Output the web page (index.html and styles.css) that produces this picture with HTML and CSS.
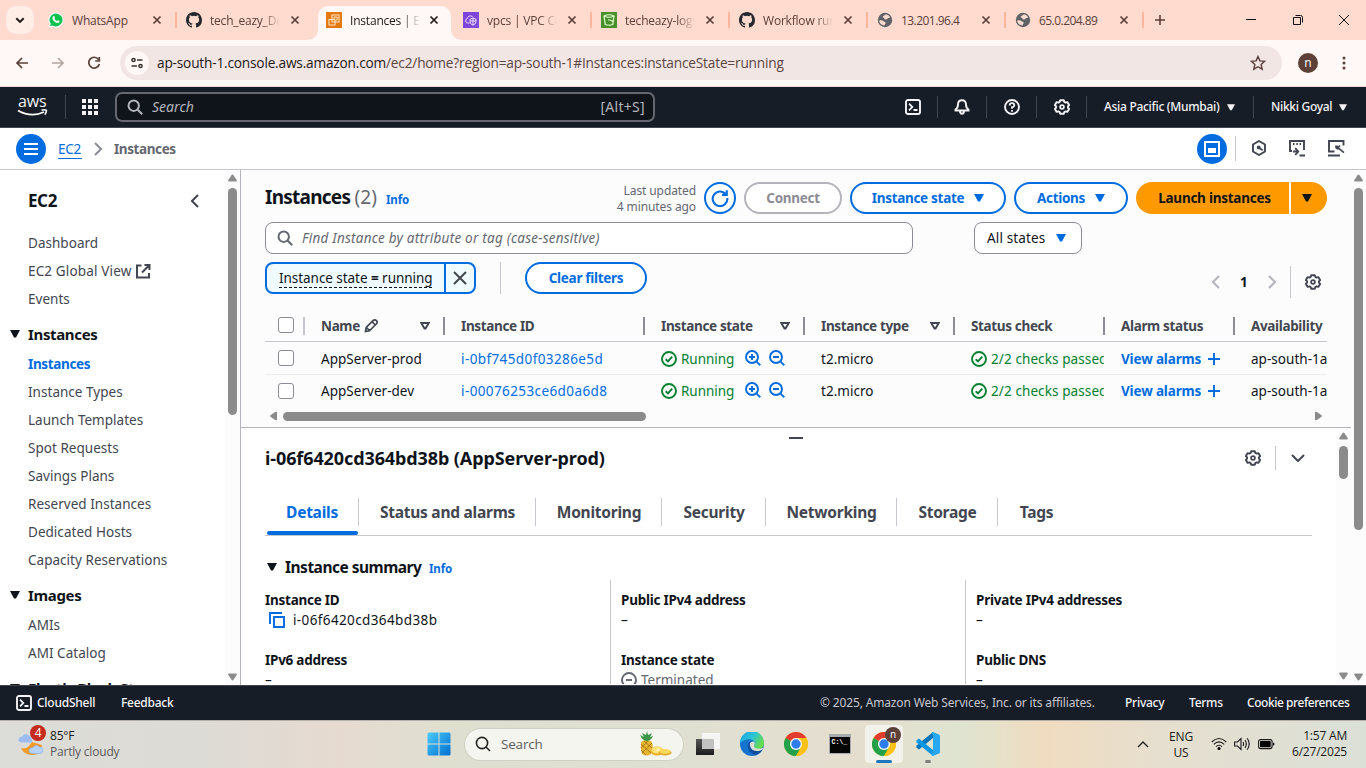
FILE: index.html
```html
<!DOCTYPE html>
<html lang="en">
<head>
<meta charset="utf-8">
<title>Instances | EC2</title>
<link rel="stylesheet" href="styles.css">
</head>
<body>
<svg class="defs" width="0" height="0">
  <symbol id="x" viewBox="0 0 10 10"><path d="M1.5 1.5l7 7M8.5 1.5l-7 7" fill="none" stroke="currentColor" stroke-width="1.7"/></symbol>
  <symbol id="github" viewBox="0 0 16 16"><path fill="#24292f" d="M8 0C3.58 0 0 3.58 0 8c0 3.54 2.29 6.53 5.47 7.59.4.07.55-.17.55-.38 0-.19-.01-.82-.01-1.49-2.01.37-2.53-.49-2.69-.94-.09-.23-.48-.94-.82-1.13-.28-.15-.68-.52-.01-.53.63-.01 1.08.58 1.23.82.72 1.21 1.87.87 2.33.66.07-.52.28-.87.51-1.07-1.78-.2-3.64-.89-3.64-3.95 0-.87.31-1.59.82-2.15-.08-.2-.36-1.02.08-2.12 0 0 .67-.21 2.2.82a7.5 7.5 0 0 1 4 0c1.53-1.04 2.2-.82 2.2-.82.44 1.1.16 1.92.08 2.12.51.56.82 1.27.82 2.15 0 3.07-1.87 3.75-3.65 3.95.29.25.54.73.54 1.48 0 1.07-.01 1.93-.01 2.2 0 .21.15.46.55.38A8 8 0 0 0 16 8c0-4.42-3.58-8-8-8z"/></symbol>
  <symbol id="globe" viewBox="0 0 16 16"><circle cx="8" cy="8" r="7.2" fill="#5f6368"/><path d="M2.2 8.600c1.700-.5 3.400-.2 4.400.7.9.9 2 .2 2 1.600 0 1.100-.9 1-.9 2.400-2.900.300-5.400-1.900-5.500-4.700zM6 4.300c1.400-.9 1.800-2 3.300-1.900 1.700.3 3 1.400 3.800 2.600-.6 1.400-1.900.5-2.600 1.500-.5.8-1.500 1.300-2.500.8-.9-.4-.3-1.200-1.200-1.500C6 5.500 5.300 5 6 4.300z" fill="#ffdbcf"/></symbol>
  <symbol id="search" viewBox="0 0 16 16"><circle cx="6.700" cy="6.700" r="5.200" fill="none" stroke="currentColor" stroke-width="2"/><path d="M10.500 10.500l4.700 4.700" stroke="currentColor" stroke-width="2"/></symbol>
  <symbol id="gear" viewBox="0 0 16 16"><path d="M6.200 1.200h3.600l.5 1.700 1.300.7 1.700-.5 1.800 3-1.200 1.300v1.200l1.200 1.300-1.800 3-1.700-.5-1.300.7-.5 1.700H6.200l-.5-1.700-1.300-.7-1.700.5-1.800-3 1.200-1.300V7.400L.9 6.100l1.800-3 1.700.5 1.300-.7z" fill="none" stroke="currentColor" stroke-width="1.900" stroke-linejoin="round"/><circle cx="8" cy="8" r="1.900" fill="none" stroke="currentColor" stroke-width="1.700"/></symbol>
  <symbol id="tri" viewBox="0 0 10 8"><path d="M0 0h10L6 7.500H4z" fill="currentColor"/></symbol>
  <symbol id="sort" viewBox="0 0 10 8"><path d="M1.300 1h7.400L5.500 6.500h-1z" fill="none" stroke="#424650" stroke-width="1.900"/></symbol>
  <symbol id="shell" viewBox="0 0 16 16"><rect x="1" y="1" width="14" height="14" rx="2" fill="none" stroke="currentColor" stroke-width="1.900"/><path d="M4 4.700L7.300 8 4 11.300M8.500 11h4" fill="none" stroke="currentColor" stroke-width="1.800"/></symbol>
  <symbol id="ok" viewBox="0 0 16 16"><circle cx="8" cy="8" r="7" fill="none" stroke="#00802f" stroke-width="1.900"/><path d="M4.700 8.200L7 10.400l4.200-4.700" fill="none" stroke="#00802f" stroke-width="1.900"/></symbol>
  <symbol id="zin" viewBox="0 0 16 16"><circle cx="7" cy="7" r="6" fill="none" stroke="#006ce0" stroke-width="1.900"/><path d="M11.300 11.300l4 4M4 7h6M7 4v6" stroke="#006ce0" stroke-width="1.900"/></symbol>
  <symbol id="zout" viewBox="0 0 16 16"><circle cx="7" cy="7" r="6" fill="none" stroke="#006ce0" stroke-width="1.900"/><path d="M11.300 11.300l4 4M4 7h6" stroke="#006ce0" stroke-width="1.900"/></symbol>
  <symbol id="up" viewBox="0 0 9 8"><path d="M3.500 1.200q1-1.400 2 0L8.700 6q.5 1.500-.7 1.500H1Q-.2 7.500.3 6z" fill="#8b8b8b"/></symbol>
  <symbol id="chrome" viewBox="0 0 24 24"><circle cx="12" cy="12" r="12" fill="#fbc116"/><path d="M12 12L1.600 6A12 12 0 0 1 22.400 6z" fill="#e33b2e"/><path d="M1.600 6A12 12 0 0 0 12 24l5-9-5-3z" fill="#22a04a"/><path d="M12 6h10.400A12 12 0 0 1 12 24l5.200-9z" fill="#fbc116"/><circle cx="12" cy="12" r="6" fill="#fff"/><circle cx="12" cy="12" r="4.700" fill="#2f7de9"/></symbol>
</svg>

<header class="tabs">
  <div class="tablist"><svg width="10" height="7" viewBox="0 0 10 7"><path d="M1.300 1.200L5 4.900l3.700-3.700" fill="none" stroke="#1f1a18" stroke-width="2"/></svg></div>
  <div class="tab"><svg class="fav" viewBox="0 0 16 16"><path d="M8 .5a7.500 7.500 0 1 1-3.800 14L.5 15.500l1-3.600A7.500 7.500 0 0 1 8 .5z" fill="#fff"/><path d="M8 1.500A6.500 6.500 0 1 1 4.500 13.500l-2.500.6.700-2.400A6.500 6.500 0 0 1 8 1.500z" fill="#0fc24f"/><path d="M5.300 4.300c.6-.6 1-.3 1.200.2l.5 1.200c0 .4-.6.8-.6 1.100.5 1 1.300 1.700 2.400 2.200.5 0 .7-.8 1.100-.8l1.700.9c.2.8-.5 1.700-1.500 1.800-2.800.2-6.300-3.200-5.600-5.500.1-.4.4-.8.8-1.100z" fill="#fff"/></svg><span class="tt">WhatsApp</span><svg class="tx"><use href="#x"/></svg></div>
  <div class="tab sep"><svg class="fav"><use href="#github"/></svg><span class="tt fade">tech_eazy_Dev</span><svg class="tx"><use href="#x"/></svg></div>
  <div class="tab active"><svg class="fav" viewBox="0 0 16 16"><path d="M0 0h16v16H0z" fill="#e47911"/><path d="M6 3h7v7H6zM8.500 7.500H3v5.500h6V8" fill="none" stroke="#ffe3c4" stroke-width="1.100"/><path d="M8 5h3v3H8z" fill="none" stroke="#ffe3c4"/></svg><span class="tt fade">Instances | EC2</span><svg class="tx"><use href="#x"/></svg></div>
  <div class="tab"><svg class="fav" viewBox="0 0 16 16"><path d="M0 0h16v16H0z" fill="#7d45dc"/><path d="M6.500 11H4.500a2.200 2.200 0 0 1-.3-4.300C4.300 4 8.500 3 9.900 5.200" fill="none" stroke="#efe2ff"/><path d="M10 6l3 1.300v2.500q0 2.200-3 3.400-3-1.200-3-3.400V7.300zM10 6v7M7 9h6" fill="none" stroke="#efe2ff"/></svg><span class="tt fade">vpcs | VPC Co</span><svg class="tx"><use href="#x"/></svg></div>
  <div class="tab sep"><svg class="fav" viewBox="0 0 16 16"><path d="M0 0h16v16H0z" fill="#47902a"/><path d="M3 4q5-2.500 10 0l-1.300 8.500q-3.700 1.500-7.400 0zM3 4q5 2.500 10 0M7 8h2l3 1.500" fill="none" stroke="#e3ffd2" stroke-width="1.200"/></svg><span class="tt fade">techeazy-logs</span><svg class="tx"><use href="#x"/></svg></div>
  <div class="tab sep"><svg class="fav"><use href="#github"/></svg><span class="tt fade">Workflow runs</span><svg class="tx"><use href="#x"/></svg></div>
  <div class="tab sep"><svg class="fav"><use href="#globe"/></svg><span class="tt ip">13.201.96.4</span><svg class="tx"><use href="#x"/></svg></div>
  <div class="tab sep"><svg class="fav"><use href="#globe"/></svg><span class="tt ip">65.0.204.89</span><svg class="tx"><use href="#x"/></svg></div>
  <div class="newtab sep"><svg width="10" height="10" viewBox="0 0 10 10"><path d="M5 0v10M0 5h10" stroke="#5b403a" stroke-width="1.600"/></svg></div>
  <div class="win">
    <svg width="10" height="10" viewBox="0 0 10 10"><path d="M0 4.500h10" stroke="#111"/></svg>
    <svg width="10" height="10" viewBox="0 0 10 10"><path d="M.5 2.500h7v7h-7zM2.500.5h5q2 0 2 2v5" fill="none" stroke="#111"/></svg>
    <svg width="10" height="10" viewBox="0 0 10 10"><path d="M0 0l10 10M10 0L0 10" stroke="#111"/></svg>
  </div>
</header>

<div class="toolbar">
  <div class="nav">
    <svg width="14" height="14" viewBox="0 0 14 14"><path d="M7 2L2 7l5 5M2 7h11" fill="none" stroke="#5b403a" stroke-width="1.700"/></svg>
    <svg width="14" height="14" viewBox="0 0 14 14"><path d="M7 2l5 5-5 5M12 7H1" fill="none" stroke="#b5a5a1" stroke-width="1.700"/></svg>
    <svg width="14" height="14" viewBox="0 0 14 14"><path d="M11.500 3.400A5.400 5.400 0 1 0 12.400 8M12.300 1v4H8.200" fill="none" stroke="#5b403a" stroke-width="1.700"/></svg>
  </div>
  <div class="omni">
    <span class="site"><svg width="14" height="12" viewBox="0 0 14 12"><circle cx="3.500" cy="3" r="1.600" fill="none" stroke="#3b302d" stroke-width="1.500"/><circle cx="10.500" cy="9" r="1.600" fill="none" stroke="#3b302d" stroke-width="1.500"/><path d="M7 3h5.500M1.500 9H7" stroke="#3b302d" stroke-width="1.500"/></svg></span>
    <span class="url"><b>ap-south-1.console.aws.amazon.com</b>/ec2/home?region=ap-south-1#Instances:instanceState=running</span>
    <svg class="star" width="16" height="16" viewBox="0 0 16 16"><path d="M8 1.500l1.900 4.400 4.800.4-3.600 3.200 1.100 4.700L8 11.700l-4.200 2.500 1.100-4.700L1.300 6.300l4.800-.4z" fill="none" stroke="#5b403a" stroke-width="1.400"/></svg>
  </div>
  <span class="avatar">n</span>
  <svg class="dots" width="4" height="14" viewBox="0 0 4 14"><circle cx="2" cy="2" r="1.500"/><circle cx="2" cy="7" r="1.500"/><circle cx="2" cy="12" r="1.500"/></svg>
</div>

<nav class="aws">
  <div class="logo"><span>aws</span><svg width="31" height="8" viewBox="0 0 31 8"><path d="M1 1.500q13 7.500 26 1.500" fill="none" stroke="#fff" stroke-width="1.800"/><path d="M24.500 1.300q3-1 5 .1-.2 2.600-1.700 4.300" fill="none" stroke="#fff" stroke-width="1.500"/></svg></div>
  <div class="apps"><svg width="16" height="16" viewBox="0 0 16 16" fill="#f3f3f7"><path d="M0 0h4v4H0zM6 0h4v4H6zM12 0h4v4h-4zM0 6h4v4H0zM6 6h4v4H6zM12 6h4v4h-4zM0 12h4v4H0zM6 12h4v4H6zM12 12h4v4h-4z"/></svg></div>
  <div class="gsearch"><svg width="16" height="16"><use href="#search"/></svg><i>Search</i><span>[Alt+S]</span></div>
  <div class="tools">
    <div><svg width="16" height="16"><use href="#shell"/></svg></div>
    <div><svg width="16" height="16" viewBox="0 0 16 16"><path d="M8 1.200q4 0 4 4.300 0 3.500 2.500 5v1h-13v-1Q4 9 4 5.500q0-4.300 4-4.300zM6 12q0 2.700 2 2.700t2-2.700" fill="none" stroke="currentColor" stroke-width="1.900"/></svg></div>
    <div><svg width="16" height="16" viewBox="0 0 16 16"><circle cx="8" cy="8" r="7" fill="none" stroke="currentColor" stroke-width="1.900"/><path d="M5.700 6.500q0-2.300 2.300-2.300t2.300 2q0 1.500-2.300 2v1.600M8 10.900v1.800" fill="none" stroke="currentColor" stroke-width="1.800"/></svg></div>
    <div><svg width="16" height="16"><use href="#gear"/></svg></div>
  </div>
  <div class="region"><span>Asia Pacific (Mumbai)</span><svg width="8" height="7"><use href="#tri"/></svg></div>
  <div class="user"><span>Nikki Goyal</span><svg width="8" height="7"><use href="#tri"/></svg></div>
</nav>

<div class="crumbs">
  <span class="burger"><svg width="14" height="14" viewBox="0 0 14 14"><path d="M0 2h14M0 7h14M0 12h14" stroke="#fff" stroke-width="2"/></svg></span>
  <a>EC2</a>
  <svg class="sepc" width="8" height="14" viewBox="0 0 8 14"><path d="M1 1l6 6-6 6" fill="none" stroke="#8c8c94" stroke-width="2"/></svg>
  <b>Instances</b>
  <span class="panelbtn"><svg width="16" height="16" viewBox="0 0 16 16"><path d="M1 1h14v14H1z" fill="none" stroke="#fff" stroke-width="2"/><path d="M4 7h8v5H4z" fill="#fff"/></svg></span>
  <span class="cbar"></span>
  <span class="cicons">
    <svg width="16" height="16" viewBox="0 0 16 16"><path d="M8 1l6 3.500v7L8 15l-6-3.500v-7z" fill="none" stroke="#424650" stroke-width="1.900"/><circle cx="7.700" cy="7.400" r="1.900" fill="#424650"/><path d="M8 8l3.800 2.300" stroke="#424650" stroke-width="1.900"/></svg>
    <svg width="18" height="17" viewBox="0 0 18 17"><path d="M4 11H2V1h14v9M5 4h1.500M8.300 4h1.500M11.600 4h1.500M11.500 15.500H17" fill="none" stroke="#424650" stroke-width="1.900"/><path d="M5 11.500h4.500M7.200 8.200l3 3.300-3 3.500" fill="none" stroke="#424650" stroke-width="1.900"/></svg>
    <svg width="18" height="17" viewBox="0 0 18 17"><path d="M7.500 11.500H2V1h14.500v4.500M1 15.500h12" fill="none" stroke="#424650" stroke-width="1.900"/><path d="M9 5.500q-.5 3.500 3 3.200l5 4M9.500 5.800l1.800 1.500 1.800-1.800" fill="none" stroke="#424650" stroke-width="1.700"/></svg>
  </span>
</div>

<div class="page">
  <aside class="side">
    <div class="stitle"><b>EC2</b><svg width="8" height="14" viewBox="0 0 8 14"><path d="M7 1L1 7l6 6" fill="none" stroke="#424650" stroke-width="2"/></svg></div>
    <a>Dashboard</a>
    <a class="ext">EC2 Global View <svg width="15" height="15" viewBox="0 0 15 15"><path d="M5.500 1.500H1v12h12V9M8.500 1h5v5M13.500 1L6 8.500" fill="none" stroke="#424650" stroke-width="2"/></svg></a>
    <a>Events</a>
    <h4><svg width="10" height="8"><use href="#tri"/></svg>Instances</h4>
    <a class="cur">Instances</a><a>Instance Types</a><a>Launch Templates</a><a>Spot Requests</a><a>Savings Plans</a><a>Reserved Instances</a><a>Dedicated Hosts</a><a>Capacity Reservations</a>
    <h4><svg width="10" height="8"><use href="#tri"/></svg>Images</h4>
    <a>AMIs</a><a>AMI Catalog</a>
    <h4><svg width="10" height="8"><use href="#tri"/></svg>Elastic Block Store</h4>
  </aside>
  <div class="sb lane1"><svg width="9" height="8"><use href="#up"/></svg><i></i><svg class="dn" width="9" height="8"><use href="#up"/></svg></div>

  <div class="content">
    <section class="list">
      <div class="lhead">
        <h1>Instances <span>(2)</span></h1><a class="info">Info</a>
        <div class="upd">Last updated<br>4 minutes ago</div>
        <button class="btn round"><svg width="18" height="18" viewBox="0 0 16 16"><path d="M13 4.500A6.500 6.500 0 1 0 14.500 8M14 1v4.200H9.800" fill="none" stroke="currentColor" stroke-width="1.900"/></svg></button>
        <button class="btn dis">Connect</button>
        <button class="btn ist">Instance state <svg width="10" height="8"><use href="#tri"/></svg></button>
        <button class="btn act">Actions <svg width="10" height="8"><use href="#tri"/></svg></button>
        <button class="go">Launch instances</button><button class="go caret"><svg width="10" height="8"><use href="#tri"/></svg></button>
      </div>
      <div class="lfilter">
        <div class="find"><svg width="16" height="16"><use href="#search"/></svg><i>Find Instance by attribute or tag (case-sensitive)</i></div>
        <div class="sel">All states <svg width="10" height="8"><use href="#tri"/></svg></div>
      </div>
      <div class="ltoken">
        <div class="token"><span><em>Instance state <b>=</b> running</em></span><u><svg width="14" height="14" viewBox="0 0 14 14"><path d="M1 1l12 12M13 1L1 13" stroke="#424650" stroke-width="2"/></svg></u></div>
        <span class="vbar"></span>
        <button class="btn clr">Clear filters</button>
        <div class="pager">
          <svg width="8" height="14" viewBox="0 0 8 14"><path d="M7 1L1 7l6 6" fill="none" stroke="#b4b4bb" stroke-width="2"/></svg>
          <b>1</b>
          <svg width="8" height="14" viewBox="0 0 8 14"><path d="M1 1l6 6-6 6" fill="none" stroke="#b4b4bb" stroke-width="2"/></svg>
          <span></span>
          <svg width="16" height="16"><use href="#gear"/></svg>
        </div>
      </div>
      <div class="grid head">
        <div class="ck"><i></i></div>
        <div>Name <svg class="pen" width="15" height="15" viewBox="0 0 15 15"><path d="M1.500 13.500l.7-4 7-7q1.700-1.400 3.200.1t.1 3.200l-7 7zM8 3.700L11.300 7M2.500 9.500l3 3" fill="none" stroke="#424650" stroke-width="1.700"/></svg><svg class="so" width="10" height="8"><use href="#sort"/></svg></div>
        <div>Instance ID</div>
        <div>Instance state<svg class="so" width="10" height="8"><use href="#sort"/></svg></div>
        <div>Instance type<svg class="so" width="10" height="8"><use href="#sort"/></svg></div>
        <div>Status check</div>
        <div>Alarm status</div>
        <div class="az">Availability Zone</div>
      </div>
      <div class="grid row first">
        <div class="ck"><i></i></div><div>AppServer-prod</div><div class="id">i-0bf745d0f03286e5d</div>
        <div class="run"><svg width="16" height="16"><use href="#ok"/></svg><span>Running</span><svg width="16" height="16"><use href="#zin"/></svg><svg width="16" height="16"><use href="#zout"/></svg></div>
        <div>t2.micro</div><div class="chk"><svg width="16" height="16"><use href="#ok"/></svg><span>2/2 checks passed</span></div>
        <div class="al"><span>View alarms</span><svg width="12" height="12" viewBox="0 0 12 12"><path d="M6 0v12M0 6h12" stroke="#006ce0" stroke-width="1.900"/></svg></div><div>ap-south-1a</div>
      </div>
      <div class="grid row last">
        <div class="ck"><i></i></div><div>AppServer-dev</div><div class="id">i-00076253ce6d0a6d8</div>
        <div class="run"><svg width="16" height="16"><use href="#ok"/></svg><span>Running</span><svg width="16" height="16"><use href="#zin"/></svg><svg width="16" height="16"><use href="#zout"/></svg></div>
        <div>t2.micro</div><div class="chk"><svg width="16" height="16"><use href="#ok"/></svg><span>2/2 checks passed</span></div>
        <div class="al"><span>View alarms</span><svg width="12" height="12" viewBox="0 0 12 12"><path d="M6 0v12M0 6h12" stroke="#006ce0" stroke-width="1.900"/></svg></div><div>ap-south-1a</div>
      </div>
      <div class="hsb"><svg class="lf" width="9" height="8"><use href="#up"/></svg><i></i><svg class="rt" width="9" height="8"><use href="#up"/></svg></div>
    </section>

    <section class="split">
      <div class="sbody">
        <div class="handle"></div>
        <div class="shead"><h2>i-06f6420cd364bd38b (AppServer-prod)</h2><svg width="16" height="16"><use href="#gear"/></svg><span></span><svg class="dnc" width="14" height="8" viewBox="0 0 14 8"><path d="M1 1l6 6 6-6" fill="none" stroke="#424650" stroke-width="2"/></svg></div>
        <div class="stabs"><b class="on">Details</b><b>Status and alarms</b><b>Monitoring</b><b>Security</b><b>Networking</b><b>Storage</b><b>Tags</b></div>
        <div class="sumh"><svg width="10" height="8"><use href="#tri"/></svg><h3>Instance summary</h3><a class="info">Info</a></div>
        <div class="sum">
          <dl><dt>Instance ID</dt><dd class="cp"><svg width="16" height="16" viewBox="0 0 16 16"><path d="M5 5h10v10H5zM1 12V1h12" fill="none" stroke="#006ce0" stroke-width="1.900"/></svg>i-06f6420cd364bd38b</dd><dt>IPv6 address</dt><dd>–</dd></dl>
          <dl><dt>Public IPv4 address</dt><dd>–</dd><dt>Instance state</dt><dd class="term"><svg width="16" height="16" viewBox="0 0 16 16"><circle cx="8" cy="8" r="7" fill="none" stroke="#656871" stroke-width="1.900"/><path d="M5 8h6" stroke="#656871" stroke-width="1.900"/></svg>Terminated</dd></dl>
          <dl><dt>Private IPv4 addresses</dt><dd>–</dd><dt>Public DNS</dt><dd>–</dd></dl>
        </div>
      </div>
      <div class="sb lane2"><svg width="9" height="8"><use href="#up"/></svg><i></i><svg class="dn" width="9" height="8"><use href="#up"/></svg></div>
    </section>
  </div>
  <div class="sb lane3"><svg width="9" height="8"><use href="#up"/></svg><i></i><svg class="dn" width="9" height="8"><use href="#up"/></svg></div>
</div>

<footer class="foot">
  <svg width="16" height="16"><use href="#shell"/></svg><span class="cs">CloudShell</span><span class="fb">Feedback</span>
  <span class="copy">© 2025, Amazon Web Services, Inc. or its affiliates.</span><span class="pv">Privacy</span><span class="tm">Terms</span><span class="cookie">Cookie preferences</span>
</footer>

<div class="task">
  <div class="weather">
    <svg width="28" height="30" viewBox="0 0 28 30"><path d="M3 19q5 1 7-1t4-5l10 3q-1 10-10 10-8 0-11-7z" fill="#f39a27"/><path d="M4 13.500q-4 0-3.500-3t4-3q2-4 6-1.500T14 13.500z" fill="#9dbdf0"/><path d="M14 24.500q-3.500 0-3-3t4-3q3-4 6.500-.5 4 .5 3.500 3.500-.5 3-3 3z" fill="#b8d3fa" stroke="#84a8e8" stroke-width=".6"/></svg>
    <span class="badge">4</span>
    <div><span>85°F</span><span class="pc">Partly cloudy</span></div>
  </div>
  <svg class="start" width="24" height="24" viewBox="0 0 24 24"><defs><linearGradient id="w" x2="1" y2="1"><stop stop-color="#4dcbfb"/><stop offset="1" stop-color="#006fd0"/></linearGradient></defs><path d="M.5 2q0-1.500 1.500-1.500h9.500v11H.5zM12.500.5H22q1.500 0 1.500 1.500v9.500h-11zM.5 12.500h11v11H2Q.5 23.500.5 22zM12.500 12.500h11V22q0 1.500-1.500 1.500h-9.500z" fill="url(#w)"/></svg>
  <div class="tsearch"><svg width="16" height="16" viewBox="0 0 16 16"><circle cx="7" cy="7" r="5.600" fill="none" stroke="#222" stroke-width="1.600"/><path d="M11 11l4 4" stroke="#222" stroke-width="1.600"/></svg><span>Search</span>
    <svg width="34" height="26" viewBox="0 0 34 26"><path d="M2 11q6-4 11 0 2 7-1 12-4 3-9 0-2-6-1-12z" fill="#e5b52f"/><path d="M2 13l10 9M5 10l9 8M13 12L3 22M9 10l-7 7M2 19l5 5" stroke="#a87619" stroke-width=".9"/><path d="M7 10Q3 9 1 4l4 2-2-4 4 2 1-4 1 4 4-2-2 4 3-1q-2 5-7 5z" fill="#3c9448"/><ellipse cx="18" cy="20" rx="6.500" ry="4.500" fill="#e9af28"/><ellipse cx="18" cy="19" rx="5.500" ry="3.500" fill="#ffe37a"/><ellipse cx="26" cy="21.500" rx="6.500" ry="3" fill="#e2a724"/><ellipse cx="26" cy="20.500" rx="5.500" ry="2.500" fill="#fbd75c"/><circle cx="19" cy="19" r="1.500" fill="#fff2b5"/></svg>
  </div>
  <div class="appsrow">
    <svg width="24" height="24" viewBox="0 0 24 24"><defs><linearGradient id="tk" x2="0" y2="1"><stop stop-color="#555"/><stop offset="1" stop-color="#1d1d1d"/></linearGradient></defs><path d="M0 7h18v16H0z" fill="url(#tk)"/><path d="M6 1h18v16H6z" fill="#f7f7f7" opacity=".9"/><path d="M6 7h12v10H6z" fill="#c1c1c1"/></svg>
    <svg width="24" height="24" viewBox="0 0 24 24"><defs><linearGradient id="eg" x2="1" y2=".5"><stop stop-color="#1f9de0"/><stop offset=".55" stop-color="#2cc5d8"/><stop offset="1" stop-color="#67dc4d"/></linearGradient></defs><circle cx="12" cy="12" r="12" fill="#1574cf"/><path d="M0 11A12 12 0 0 1 24 11q0 6-6 6-5 0-4-3 2-3-.5-5.500Q7 5 0 11z" fill="url(#eg)"/><path d="M8 12q-1 8 7 11 5-1 7-5-11 3-12-4 0-3 3-4-4-1-5 2z" fill="#104e9d"/><path d="M14 14q2-4-1-4.500-4 .5-3 4 1 6 9 5.500l3.500-1.500.8-1.500q-9 2-9.300-2z" fill="#dedfd2"/></svg>
    <svg width="24" height="24"><use href="#chrome"/></svg>
    <svg width="24" height="24" viewBox="0 0 24 24"><path d="M1 2h22v20H1z" fill="#a7aaae"/><path d="M2 5h20v16H2z" fill="#050505"/><text x="3.500" y="12" class="cmd">C:\_</text></svg>
    <div class="actapp"><svg width="24" height="24"><use href="#chrome"/></svg><span>n</span></div>
    <div class="code"><svg width="24" height="24" viewBox="0 0 24 24"><path d="M17 0v6L3 17.500.3 15.500v-1.800z" fill="#0876bd"/><path d="M17 24v-6L3 6.500.3 8.500v1.800z" fill="#0c98e5"/><path d="M17 0l6 2.500q1 .5 1 1.500v16q0 1-1 1.500L17 24q-1 0-1.500-1 1.500-1 1.500-3V4q0-2-1.500-3 .5-1 1.500-1z" fill="#29a9f2"/></svg></div>
  </div>
  <svg class="chev" width="12" height="7" viewBox="0 0 12 7"><path d="M1 6l5-5 5 5" fill="none" stroke="#222" stroke-width="1.400"/></svg>
  <div class="lang">ENG<br>US</div>
  <div class="tray">
    <svg width="16" height="14" viewBox="0 0 16 14"><path d="M.7 5q7.300-7 14.600 0M2.800 7.400q5.200-5 10.400 0M5 9.700q3-3 6 0" fill="none" stroke="#1b1b1b" stroke-width="1.100"/><circle cx="8" cy="11.500" r="1.500"/></svg>
    <svg width="17" height="14" viewBox="0 0 17 14"><path d="M.6 5h2.900L7 1.500v11L3.500 9H.6zM9 5q1.200 2 0 4M11 3q2.600 4 0 8M13.200 1.300q4 5.700 0 11.400" fill="none" stroke="#1b1b1b" stroke-width="1.100"/></svg>
    <svg width="17" height="12" viewBox="0 0 17 12"><rect x=".6" y="1.600" width="13.500" height="9" rx="2" fill="none" stroke="#1b1b1b" stroke-width="1.100"/><rect x="2" y="3" width="10.700" height="6.200" rx=".7"/><path d="M15 4.500q1.500.2 1.500 1.600T15 7.700z"/></svg>
  </div>
  <div class="clock">1:57 AM<br>6/27/2025</div>
</div>
</body>
</html>
```
FILE: styles.css
```css
* { box-sizing: border-box; }
body { margin: 0; width: 1366px; height: 768px; overflow: hidden; display: flex; flex-direction: column; background: #fff; color: #0f141a; font: 13.500px/20px "Noto Sans", "Open Sans", sans-serif; letter-spacing: 0.03px; }
svg { display: block; flex: none; }
.defs { position: absolute; }
button { font: inherit; letter-spacing: inherit; padding: 0; margin: 0; border: 0; }
h1, h2, h3, h4, dl, dt, dd { margin: 0; }
i { font-style: italic; }

/* browser tab strip */
.tabs { height: 40px; flex: none; background: #ffdbcf; display: flex; color: #5b403a; font: 12px/16px "Open Sans", sans-serif; letter-spacing: -0.2px; }
.tablist { width: 28px; height: 28px; margin: 6px 4px 0 6px; border-radius: 10px; background: #ffede6; display: flex; align-items: center; justify-content: center; }
.tab { width: 138px; height: 34px; margin-top: 6px; padding: 0 15px 6px 10px; display: flex; align-items: center; position: relative; }
.fav { width: 16px; height: 16px; margin-right: 8px; }
.tt { width: 70px; overflow: hidden; white-space: nowrap; padding-top: 1px; }
.fade { -webkit-mask-image: linear-gradient(90deg, #000 75%, transparent 100%); mask-image: linear-gradient(90deg, #000 75%, transparent 100%); }
.ip { letter-spacing: -0.550px; }
.tx { width: 10px; height: 10px; margin-left: auto; margin-right: -1px; }
.sep::before { content: ""; position: absolute; left: -1px; top: 6px; width: 2px; height: 16px; background: #ffb59d; }
.tab.active { background: #fff8f6; border-radius: 10px 10px 0 0; color: #231917; margin-left: 4px; width: 133px; padding-left: 8px; padding-right: 13px; margin-right: 2px; }
.tab.active::before, .tab.active::after { content: ""; position: absolute; bottom: 0; width: 10px; height: 10px; }
.tab.active::before { left: -10px; background: radial-gradient(circle at 0 0, transparent 9.500px, #fff8f6 10px); }
.tab.active::after { right: -10px; background: radial-gradient(circle at 100% 0, transparent 9.500px, #fff8f6 10px); }
.newtab { position: relative; height: 28px; margin-top: 6px; width: 34px; display: flex; align-items: center; padding-left: 12px; }
.win { margin-left: auto; width: 103px; display: flex; justify-content: space-between; align-items: center; margin-right: 17px; }

/* browser toolbar */
.toolbar { height: 47px; flex: none; background: #fff8f6; border-bottom: 1px solid #f5ddd6; display: flex; align-items: center; }
.nav { width: 120px; padding-left: 15px; display: flex; gap: 22px; }
.omni { width: 1162px; height: 34px; border-radius: 17px; background: #f2e6e4; display: flex; align-items: center; padding-left: 5px; }
.site { width: 24px; height: 24px; border-radius: 50%; background: #fff8f6; display: flex; align-items: center; justify-content: center; }
.url { width: 640px; margin-left: 8px; white-space: nowrap; color: #5b4743; font: 13.700px/20px "Open Sans", sans-serif; letter-spacing: -0.2px; }
.url b { font-weight: 400; color: #231917; }
.star { margin-left: auto; margin-right: 16px; }
.avatar { width: 20px; height: 20px; border-radius: 50%; background: #5d4037; color: #fff; margin-left: 16px; text-align: center; font: 12px/19px "Open Sans", sans-serif; }
.dots { margin-left: 24px; fill: #5b403a; }

/* console top bar */
.aws { height: 41px; flex: none; background: #161d26; border-bottom: 1px solid #424650; color: #f3f3f7; display: flex; align-items: center; }
.logo { width: 66px; height: 24px; border-right: 1px solid #424650; padding-left: 17px; }
.logo span { display: block; font: 500 16px/13px "Open Sans", sans-serif; padding-left: 1px; letter-spacing: -0.1px; }
.logo svg { margin-top: 1px; }
.apps { width: 49px; padding-left: 16px; }
.gsearch { width: 540px; height: 30px; border: 2px solid #656871; border-radius: 7px; background: #0f141a; display: flex; align-items: center; padding: 0 8px 0 10px; color: #b4b4bb; font-size: 14px; }
.gsearch i { margin-left: 9px; }
.gsearch span { margin-left: auto; letter-spacing: 0.3px; }
.tools { margin-left: 233px; height: 22px; display: flex; }
.tools div { width: 50px; border-right: 1px solid #424650; display: flex; align-items: center; justify-content: center; }
.tools div:nth-child(2) { width: 49px; }
.region, .user { display: flex; align-items: center; font-size: 12px; font-weight: 500; }
.region { width: 167px; height: 22px; border-right: 1px solid #424650; padding-left: 17px; letter-spacing: -0.3px; }
.region span { width: 123px; white-space: nowrap; }
.user { padding-left: 17px; letter-spacing: -0.3px; }
.user span { width: 68px; white-space: nowrap; }

/* breadcrumb bar */
.crumbs { height: 42px; flex: none; border-bottom: 1px solid #c6c6cd; display: flex; align-items: center; padding-left: 16px; }
.burger, .panelbtn { width: 30px; height: 30px; border-radius: 50%; background: #006ce0; display: flex; align-items: center; justify-content: center; }
.crumbs a { width: 24px; margin-left: 12px; color: #006ce0; border-bottom: 1px solid #006ce0; line-height: 18px; padding-top: 1px; letter-spacing: -0.3px; }
.sepc { margin-left: 12px; }
.crumbs b { margin-left: 12px; width: 70px; color: #656871; letter-spacing: -0.4px; }
.panelbtn { margin-left: 1013px; }
.cbar { width: 1px; height: 25px; background: #c6c6cd; margin-left: 8px; }
.cicons { display: flex; margin-left: 15px; gap: 21px; }

.page { height: 515px; flex: none; display: flex; }
.side { width: 225px; overflow: hidden; color: #424650; padding-top: 16px; }
.stitle { height: 30px; margin-bottom: 13px; display: flex; align-items: center; justify-content: space-between; padding: 0 26px 0 28px; font-size: 17px; color: #0f141a; letter-spacing: -0.4px; }
.side a { display: flex; align-items: center; gap: 5px; height: 28px; padding-left: 28px; white-space: nowrap; }
.side .ext { letter-spacing: 0.15px; }
.side .cur { color: #006ce0; font-weight: 700; letter-spacing: -0.35px; }
.side h4 { height: 29px; margin-top: 7px; margin-bottom: 1px; display: flex; align-items: center; gap: 8px; padding-left: 10px; color: #0f141a; font-size: 15px; line-height: 20px; padding-bottom: 1px; letter-spacing: -0.35px; white-space: nowrap; }
.sb { background: #fcfcfc; display: flex; flex-direction: column; align-items: center; flex: none; padding-top: 4px; padding-bottom: 4px; }
.sb i { width: 9px; background: #8b8b8b; border-radius: 5px; margin-top: 6px; }
.dn { transform: rotate(180deg); margin-top: auto; }
.lane1 { width: 16px; border-right: 1px solid #b4b4bb; }
.lane1 i { height: 227px; }
.lane3 { width: 15px; }
.lane3 i { height: 342px; }
.content { width: 1110px; background: #fcfcfd; display: flex; flex-direction: column; }

/* instance list */
.list { height: 257px; padding: 12px 24px 0; overflow: hidden; }
.lhead { height: 32px; display: flex; align-items: center; width: 1062px; }
h1 { font-size: 19px; line-height: 24px; letter-spacing: -0.75px; width: 121px; white-space: nowrap; margin-top: -2px; }
h1 span { font-weight: 400; color: #656871; letter-spacing: 0.2px; }
.info { color: #006ce0; font-size: 11.500px; font-weight: 700; letter-spacing: -0.1px; padding-top: 3px; }
.upd { margin-left: auto; margin-right: 8px; text-align: right; font-size: 12px; line-height: 16px; color: #656871; letter-spacing: -0.1px; padding-top: 1px; }
.btn { height: 32px; border: 2px solid #006ce0; border-radius: 16px; background: #fff; color: #006ce0; font-weight: 700; display: flex; align-items: center; justify-content: center; gap: 10px; letter-spacing: -0.3px; white-space: nowrap; }
.round { width: 32px; }
.dis { width: 98px; margin-left: 8px; border-color: #b4b4bb; color: #8c8c94; }
.ist { width: 156px; margin-left: 8px; }
.act { width: 114px; margin: 0 8px; }
.go { height: 32px; width: 153px; background: #ff9900; color: #0f141a; font-weight: 700; border-radius: 16px 0 0 16px; padding-left: 4px; letter-spacing: -0.25px; white-space: nowrap; }
.caret { width: 36px; margin-left: 2px; border-radius: 0 16px 16px 0; padding: 0 0 0 11px; }
.lfilter { margin-top: 8px; display: flex; }
.find { width: 648px; height: 32px; border: 1px solid #8c8c94; border-radius: 8px; background: #fff; display: flex; align-items: center; padding-left: 11px; gap: 9px; color: #656871; letter-spacing: 0.24px; }
.sel { width: 108px; height: 32px; margin-left: 61px; border: 1px solid #8c8c94; border-radius: 8px; background: #fff; display: flex; align-items: center; padding: 0 15px 0 12px; justify-content: space-between; letter-spacing: 0.15px; }
.sel svg { color: #006ce0; }
.ltoken { margin-top: 8px; height: 32px; display: flex; }
.token { width: 211px; border: 2px solid #006ce0; border-radius: 8px; background: #f0fbff; display: flex; align-items: center; }
.token span { width: 179px; height: 28px; border-right: 2px solid #006ce0; padding: 4px 0 0 12px; }
.token em { font-style: normal; display: inline-block; line-height: 18px; border-bottom: 1px dashed #0f141a; letter-spacing: -0.05px; white-space: nowrap; }
.token u { width: 28px; display: flex; justify-content: center; }
.vbar { width: 1px; background: #c6c6cd; margin-left: 24px; }
.clr { width: 122px; margin-left: 24px; }
.pager { margin: 4px 6px 0 auto; display: flex; align-items: center; height: 32px; color: #424650; }
.pager b { width: 48px; text-align: center; color: #0f141a; }
.pager span { width: 1px; height: 32px; background: #c6c6cd; margin: 0 14px 0 14px; }
.grid { width: 1062px; height: 33px; display: grid; grid-template-columns: 40px 140px 200px 160px 150px 150px 130px 92px; overflow: hidden; border-bottom: 1px solid #ebebf0; white-space: nowrap; }
.grid > div { padding-left: 16px; display: flex; align-items: center; overflow: hidden; position: relative; }
.head { height: 32px; margin-top: 16px; border-color: #c6c6cd; font-weight: 700; color: #424650; letter-spacing: -0.35px; }
.head > div:not(:last-child)::after { content: ""; position: absolute; right: 0; top: 7px; width: 2px; height: 18px; background: #8c8c94; }
.head > .ck::after { background: #c6c6cd !important; }
.az { word-spacing: 4px; }
.so { margin-left: auto; margin-right: 15px; }
.pen { margin-left: 4px; }
.grid > .ck { padding-left: 13px; }
.ck i { width: 16px; height: 16px; border: 1px solid #8c8c94; border-radius: 3px; background: #fff; margin-top: -1px; }
.first > div:not(.ck) { padding-top: 2px; }
.last { border: 0; height: 32px; }
.id { color: #006ce0; letter-spacing: 0.4px; }
.run, .chk { color: #00802f; }
.run span { width: 64px; margin-left: 4px; letter-spacing: -0.05px; }
.run svg:nth-of-type(n+2) { margin-top: -2px; }
.run svg:nth-of-type(3) { margin-left: 8px; }
.chk span { margin-left: 4px; letter-spacing: 0.1px; }
.grid > .chk { margin-right: 1px; }
.al { color: #006ce0; font-weight: 700; letter-spacing: -0.15px; }
.al span { width: 87px; }
.hsb { height: 18px; display: flex; align-items: center; padding: 0 4px; }
.hsb i { width: 363px; height: 9px; border-radius: 5px; background: #8b8b8b; margin-left: 5px; }
.lf { transform: rotate(-90deg); }
.rt { transform: rotate(90deg); margin-left: auto; }

/* split panel */
.split { height: 258px; border-top: 1px solid #b4b4bb; background: #fff; display: flex; overflow: hidden; }
.sbody { width: 1095px; padding-left: 24px; }
.lane2 { width: 15px; padding-bottom: 5px; }
.lane2 i { height: 33px; }
.handle { width: 14px; height: 2px; background: #424650; margin: 9px 0 0 524px; }
.shead { height: 24px; margin-top: 7px; display: flex; align-items: center; color: #424650; }
h2 { width: 980px; font-size: 18px; letter-spacing: -0.1px; color: #0f141a; white-space: nowrap; }
.shead span { width: 1px; height: 24px; background: #c6c6cd; margin: 0 15px 0 14px; }
.stabs { width: 1047px; height: 41px; margin-top: 25px; border-bottom: 1px solid #c6c6cd; display: flex; padding-left: 1px; font-size: 15.500px; letter-spacing: -0.25px; color: #424650; white-space: nowrap; }
.stabs b { height: 28px; margin-top: 3px; line-height: 28px; border-right: 1px solid #c6c6cd; text-align: center; width: 126px; position: relative; padding-left: 1px; }
.stabs b:nth-child(1) { width: 93px; color: #006ce0; padding: 0; }
.stabs b:nth-child(2) { width: 177px; }
.stabs b:nth-child(4) { width: 104px; }
.stabs b:nth-child(5) { width: 131px; }
.stabs b:nth-child(6) { width: 101px; }
.stabs b:nth-child(7) { width: 76px; border: 0; }
.stabs .on::after { content: ""; position: absolute; left: 1px; right: 0; top: 33px; height: 4px; border-radius: 2px; background: #006ce0; }
.sumh { height: 24px; margin-top: 19px; margin-bottom: 1px; display: flex; align-items: center; padding-left: 2px; }
h3 { margin-left: 8px; width: 144px; font-size: 15.500px; letter-spacing: -0.5px; white-space: nowrap; }
.sum { display: grid; grid-template-columns: 345px 355px 347px; height: 104px; overflow: hidden; }
.sum dl { padding-top: 10px; }
.sum dl + dl { border-left: 1px solid #c6c6cd; padding-left: 10px; }
.sum dt { font-weight: 700; height: 20px; letter-spacing: -0.25px; }
.sum dd { height: 20px; margin-bottom: 20px; display: flex; align-items: center; }
.sum .cp { padding-left: 4px; gap: 8px; letter-spacing: 0.38px; }
.sum .term { gap: 4px; color: #656871; letter-spacing: 0; }

.foot { height: 35px; flex: none; background: #161d26; border-top: 1px solid #424650; display: flex; align-items: center; padding-left: 16px; font-size: 12px; font-weight: 500; color: #f3f3f7; letter-spacing: -0.25px; white-space: nowrap; }
.cs { margin-left: 5px; width: 84px; }
.fb { width: 699px; }
.copy { width: 305px; font-weight: 400; color: #c6c6cd; letter-spacing: -0.15px; }
.pv { width: 64px; }
.tm { width: 58px; }
.cookie { letter-spacing: -0.45px; }

/* desktop taskbar */
.task { height: 48px; flex: none; display: flex; align-items: center; box-shadow: inset 0 1px 0 #b5b0aa; background: linear-gradient(90deg, #dcddd8 0, #dddbd5 200px, #e6dad0 340px, #dfdfd0 440px, #dee0d2 660px, #e5decf 850px, #dfe4d1 960px, #f0dcc0 1045px, #e6dfcf 1160px, #dbe0d7 1366px); font: 12px/16px "Open Sans", sans-serif; letter-spacing: -0.2px; color: #1b1b1b; }
.weather { width: 427px; padding-left: 18px; display: flex; align-items: center; position: relative; gap: 4px; }
.weather div span { display: block; }
.weather .pc { color: #5a5a5a; }
.weather .badge { position: absolute; left: 30px; top: -3px; width: 16px; height: 16px; border-radius: 50%; background: #c42b1c; color: #fff; text-align: center; line-height: 16px; }
.tsearch { width: 218px; height: 31px; margin-left: 14px; border-radius: 16px; background: #f5f5ef; box-shadow: 0 0 0 1px #cfd0c6; display: flex; align-items: center; padding-left: 10px; color: #5c5c5c; font-size: 13.500px; }
.tsearch span { margin-left: 10px; width: 138px; }
.appsrow { display: flex; align-items: center; margin-left: 13px; gap: 20px; }
.cmd { fill: #fff; font: 700 6.500px "Liberation Mono", monospace; letter-spacing: 0; }
.actapp { width: 38px; height: 38px; margin: 0 -7px; border-radius: 4px; background: #f3f2ea; position: relative; display: flex; align-items: center; justify-content: center; }
.actapp span { position: absolute; right: 2px; top: 2px; width: 16px; height: 16px; border-radius: 50%; background: #5d4037; color: #fff; text-align: center; font-size: 10px; line-height: 15px; }
.actapp::after { content: ""; position: absolute; left: 11px; bottom: 0; width: 16px; height: 3px; border-radius: 2px; background: #1d75bd; }
.code { position: relative; }
.code::after { content: ""; position: absolute; left: 9px; top: 28px; width: 6px; height: 3px; border-radius: 2px; background: #80827a; }
.chev { margin-left: 197px; }
.lang { width: 36px; margin-left: 14px; text-align: center; padding-top: 1px; }
.tray { display: flex; align-items: center; gap: 7px; margin-left: 12px; }
.clock { margin-left: auto; margin-right: 19px; text-align: right; }
```
